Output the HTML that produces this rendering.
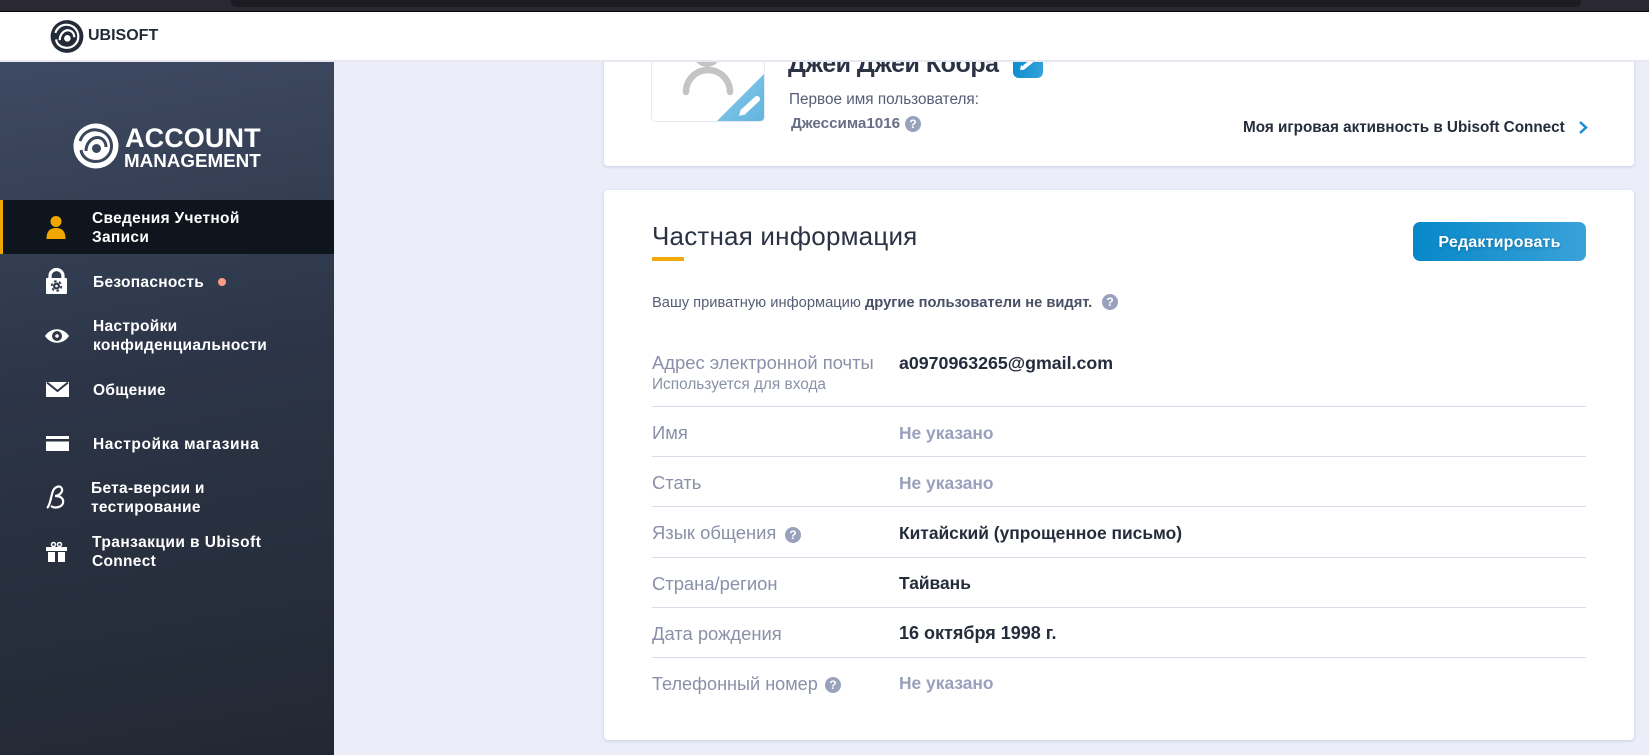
<!DOCTYPE html>
<html lang="ru"><head><meta charset="utf-8"><title>Ubisoft Account Management</title>
<style>
*{box-sizing:border-box}
html,body{margin:0;padding:0;width:1649px;height:755px;overflow:hidden;background:#ebeef9;font-family:"Liberation Sans",sans-serif}
.a{position:absolute}
.t{position:absolute;white-space:nowrap;line-height:20px;height:20px}
.nav{color:#fff;font-weight:700;font-size:15.5px;letter-spacing:.3px}
.lbl{color:#8a90a8;font-size:18.4px;left:652px}
.val{color:#252c3c;font-weight:700;font-size:17.4px;left:899px}
.na{color:#98a0bc}
.ln{position:absolute;left:652px;width:934px;height:1px;background:#d9dbe8}
.q{position:absolute;width:16px;height:16px;border-radius:50%;background:#9aa1bd;color:#fff;font-size:12px;font-weight:700;line-height:16px;text-align:center}
.card{position:absolute;left:604px;width:1030px;background:#fff;border-radius:4px;box-shadow:0 1px 3px rgba(120,130,170,.3)}
svg{position:absolute;overflow:visible}
</style></head><body>
<div class="a" style="left:0;top:0;width:1649px;height:11px;background:#2a2832"></div>
<div class="a" style="left:231px;top:0;width:1350px;height:7px;background:#1c1c22;border-radius:0 0 5px 5px"></div>
<div class="a" style="left:0;top:11px;width:1649px;height:1px;background:#0a0a0c"></div>

<!-- cards -->
<div class="card" style="top:40px;height:126px"></div>
<div class="card" style="top:190px;height:550px"></div>

<!-- avatar -->
<div class="a" style="left:651px;top:40px;width:114px;height:82px;background:#fff;border:1px solid #e6e8f2;border-radius:5px;overflow:hidden">
  <div class="a" style="right:0;bottom:0;width:47px;height:47px;clip-path:polygon(100% 0,100% 100%,0 100%);background:linear-gradient(135deg,#8accea,#62b4de)"></div>
</div>
<svg style="left:0;top:0" width="1649" height="755">
  <circle cx="707" cy="53" r="14" fill="#c4c4c4"/>
  <path d="M686 92 A22 22 0 0 1 730 92" fill="none" stroke="#c4c4c4" stroke-width="6.500" stroke-linecap="round"/>
  <path d="M743 112 L757 99" stroke="#fff" stroke-width="6" stroke-linecap="round"/>
  <path d="M739 116 L741 109 L746 114 Z" fill="#fff"/>
</svg>

<div class="t" style="left:788px;top:49px;height:30px;line-height:30px;font-size:25px;font-weight:700;color:#2a3244;letter-spacing:-.5px">Джей Джей Кобра</div>
<div class="a" style="left:1013px;top:50px;width:30px;height:28px;border-radius:6px;background:linear-gradient(100deg,#0a8acb,#36a2dc)"></div>
<svg style="left:0;top:0" width="1649" height="755"><path d="M1023 68 L1033 60" stroke="#fff" stroke-width="4" stroke-linecap="round"/><path d="M1020 70 L1021 65 L1025 69 Z" fill="#fff"/></svg>
<div class="t" style="left:789px;top:90px;font-size:15.3px;color:#565d75">Первое имя пользователя:</div>
<div class="t" style="left:791px;top:114px;font-size:15.2px;font-weight:700;color:#676d84">Джессима1016</div>
<div class="q" style="left:905px;top:116px">?</div>

<div class="t" style="left:1243px;top:118px;font-size:15.25px;font-weight:700;color:#252c3c">Моя игровая активность в Ubisoft Connect</div>
<svg style="left:0;top:0" width="1649" height="755"><path d="M1580 122 L1586 127.500 L1580 133" fill="none" stroke="#1c8fd0" stroke-width="2.500"/></svg>

<!-- header -->
<div class="a" style="left:0;top:12px;width:1649px;height:48px;background:#fff"></div>
<div class="a" style="left:0;top:60px;width:1649px;height:2px;background:#e8e8f3"></div>
<svg style="left:50px;top:19px" width="34" height="35" viewBox="0 0 46 48" fill="none" stroke="#fff">
  <circle cx="23" cy="24" r="22.500" fill="#232b38" stroke="none"/>
  <path d="M7 19 C10 10 18 7 24 8 C33 9 38 16 38.500 23 C39 32 32 39.500 23 39.500 C15 39.500 9 35 8 28" stroke-width="3"/>
  <path d="M13 29 C13 21 19 15 25 15.500 C30 16 33 20 33 25" stroke-width="3"/>
  <circle cx="23.500" cy="26.500" r="4.500" fill="#fff" stroke="none"/>
</svg>
<div class="t" style="left:88px;top:26px;font-size:16px;font-weight:700;color:#232b38">UBISOFT</div>

<!-- sidebar -->
<div class="a" style="left:0;top:62px;width:334px;height:693px;background:linear-gradient(170deg,#3e4a62 0%,#2c3547 45%,#222833 100%)"></div>
<svg style="left:73px;top:122px" width="46" height="48" viewBox="0 0 46 48" fill="none" stroke="#3a465c">
  <circle cx="23" cy="24" r="22.500" fill="#fff" stroke="none"/>
  <path d="M7 19 C10 10 18 7 24 8 C33 9 38 16 38.500 23 C39 32 32 39.500 23 39.500 C15 39.500 9 35 8 28" stroke-width="3"/>
  <path d="M13 29 C13 21 19 15 25 15.500 C30 16 33 20 33 25" stroke-width="3"/>
  <circle cx="23.500" cy="26.500" r="4.500" fill="#3a465c" stroke="none"/>
</svg>
<div class="t" style="left:125px;top:127px;height:22px;line-height:22px;font-size:27px;font-weight:700;color:#fff;letter-spacing:.1px">ACCOUNT</div>
<div class="t" style="left:124px;top:151px;font-size:18.8px;font-weight:700;color:#fff">MANAGEMENT</div>

<div class="a" style="left:0;top:200px;width:334px;height:54px;background:#0e151c"></div>
<div class="a" style="left:0;top:200px;width:3px;height:54px;background:#f0a800"></div>

<div class="t nav" style="left:92px;top:209px">Сведения Учетной</div>
<div class="t nav" style="left:92px;top:228px">Записи</div>
<div class="t nav" style="left:93px;top:273px">Безопасность</div>
<div class="a" style="left:218px;top:278px;width:8px;height:8px;border-radius:50%;background:#fa9c84"></div>
<div class="t nav" style="left:93px;top:317px">Настройки</div>
<div class="t nav" style="left:93px;top:336px">конфиденциальности</div>
<div class="t nav" style="left:93px;top:381px">Общение</div>
<div class="t nav" style="left:93px;top:435px;letter-spacing:.6px">Настройка магазина</div>
<div class="t nav" style="left:91px;top:479px">Бета-версии и</div>
<div class="t nav" style="left:91px;top:498px">тестирование</div>
<div class="t nav" style="left:92px;top:533px;letter-spacing:.45px">Транзакции в Ubisoft</div>
<div class="t nav" style="left:92px;top:552px">Connect</div>

<svg style="left:0;top:0" width="334" height="600">
  <circle cx="56" cy="221.500" r="5.500" fill="#f0a800"/>
  <path d="M46.500 239 C46.500 231 50 228 56 228 C62 228 65.500 231 65.500 239 Z" fill="#f0a800"/>
  <!-- lock -->
  <path d="M50 279 V276 A6.500 6.500 0 0 1 63 276 V279" fill="none" stroke="#fff" stroke-width="3.200"/>
  <rect x="46" y="278" width="21" height="16" rx="1" fill="#fff"/>
  <circle cx="56.500" cy="286" r="3.500" fill="#2e3648"/>
  <circle cx="56.500" cy="286" r="4.800" fill="none" stroke="#2e3648" stroke-width="1.800" stroke-dasharray="2.500 2.500"/>
  <circle cx="56.500" cy="286" r="1.300" fill="#fff"/>
  <!-- eye -->
  <path d="M45 336 C51 327 63 327 69 336 C63 345 51 345 45 336 Z" fill="#fff"/>
  <circle cx="57" cy="336" r="5" fill="#2e3648"/><circle cx="57" cy="336" r="1.800" fill="#fff"/>
  <!-- envelope -->
  <rect x="46" y="382" width="23" height="15" fill="#fff"/>
  <path d="M47 382.500 L57.500 391 L68 382.500" fill="none" stroke="#2b3445" stroke-width="2"/>
  <!-- card -->
  <rect x="46" y="436" width="23" height="15" fill="#fff"/>
  <rect x="46" y="439" width="23" height="2.500" fill="#2a3241"/>
  <!-- gift -->
  <circle cx="53.500" cy="544.500" r="2" fill="none" stroke="#fff" stroke-width="1.500"/>
  <circle cx="59.500" cy="544.500" r="2" fill="none" stroke="#fff" stroke-width="1.500"/>
  <rect x="46" y="547" width="21" height="4" fill="#fff"/>
  <rect x="48" y="552" width="7" height="10" fill="#fff"/>
  <rect x="58" y="552" width="7" height="10" fill="#fff"/>
  <!-- beta -->
  <path d="M47 508 C50 506 51 496 53 491 C55 486 61 485 62 489 C63 493 58 496 55 496 C60 496 64 498 63 503 C62 507 55 509 51 506" fill="none" stroke="#fff" stroke-width="2.200"/>
</svg>

<!-- content -->
<div class="t" style="left:652px;top:221px;height:30px;line-height:30px;font-size:26px;color:#2a3244;letter-spacing:.2px">Частная информация</div>
<div class="a" style="left:652px;top:257px;width:32px;height:4px;background:#f0ab0a"></div>
<div class="a" style="left:1413px;top:222px;width:173px;height:39px;border-radius:7px;background:linear-gradient(90deg,#0688c8,#3aa2d9)"></div>
<div class="t" style="left:1413px;width:173px;top:233px;text-align:center;color:#fff;font-weight:700;font-size:16px;letter-spacing:.2px;text-shadow:0 1px 3px rgba(0,60,110,.4)">Редактировать</div>

<div class="t" style="left:652px;top:293px;font-size:14.7px;color:#565d75">Вашу приватную информацию <b style="color:#494f66">другие пользователи не видят.</b></div>
<div class="q" style="left:1102px;top:294px">?</div>

<div class="t lbl" style="top:353px">Адрес электронной почты</div>
<div class="t" style="left:652px;top:375px;font-size:15.4px;color:#8a90a8">Используется для входа</div>
<div class="t val" style="top:353px;font-size:17.8px">a0970963265@gmail.com</div>
<div class="ln" style="top:406px"></div>
<div class="t lbl" style="top:423px">Имя</div><div class="t val na" style="top:423px">Не указано</div>
<div class="ln" style="top:456px"></div>
<div class="t lbl" style="top:473px">Стать</div><div class="t val na" style="top:473px">Не указано</div>
<div class="ln" style="top:506px"></div>
<div class="t lbl" style="top:523px">Язык общения</div><div class="q" style="left:785px;top:527px">?</div><div class="t val" style="top:523px">Китайский (упрощенное письмо)</div>
<div class="ln" style="top:557px"></div>
<div class="t lbl" style="top:574px">Страна/регион</div><div class="t val" style="top:573px">Тайвань</div>
<div class="ln" style="top:607px"></div>
<div class="t lbl" style="top:624px">Дата рождения</div><div class="t val" style="top:623px;font-size:18px">16 октября 1998 г.</div>
<div class="ln" style="top:657px"></div>
<div class="t lbl" style="top:674px;font-size:18.1px">Телефонный номер</div><div class="q" style="left:825px;top:677px">?</div><div class="t val na" style="top:673px">Не указано</div>
</body></html>
